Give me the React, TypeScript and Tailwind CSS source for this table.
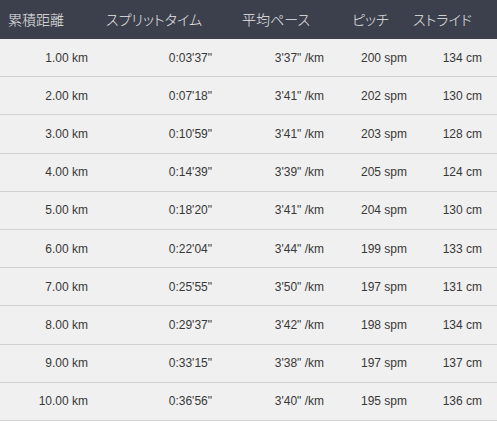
import React from "react";

const rows = [
  ["1.00 km", "0:03'37\"", "3'37\" /km", "200 spm", "134 cm"],
  ["2.00 km", "0:07'18\"", "3'41\" /km", "202 spm", "130 cm"],
  ["3.00 km", "0:10'59\"", "3'41\" /km", "203 spm", "128 cm"],
  ["4.00 km", "0:14'39\"", "3'39\" /km", "205 spm", "124 cm"],
  ["5.00 km", "0:18'20\"", "3'41\" /km", "204 spm", "130 cm"],
  ["6.00 km", "0:22'04\"", "3'44\" /km", "199 spm", "133 cm"],
  ["7.00 km", "0:25'55\"", "3'50\" /km", "197 spm", "131 cm"],
  ["8.00 km", "0:29'37\"", "3'42\" /km", "198 spm", "134 cm"],
  ["9.00 km", "0:33'15\"", "3'38\" /km", "197 spm", "137 cm"],
  ["10.00 km", "0:36'56\"", "3'40\" /km", "195 spm", "136 cm"],
];

const grid = "grid grid-cols-[97px_130px_113px_70px_87px]";

export default function App() {
  return (
    <div className="w-[497px] h-[423px] bg-white overflow-hidden">
      <div
        className={`${grid} h-[39px] items-center bg-[#3b404c] text-[#e8e8e8] text-[14px] font-light [font-family:'Noto_Sans_CJK_JP',sans-serif] [font-feature-settings:'palt']`}
      >
        <div className="pl-[8px]">累積距離</div>
        <div className="pl-[9px]">スプリットタイム</div>
        <div className="pl-[15px]">平均ペース</div>
        <div className="pl-[12px]">ピッチ</div>
        <div className="pl-[3px]">ストライド</div>
      </div>
      {rows.map((r, i) => (
        <div
          key={i}
          className={`${grid} h-[38.2px] items-center bg-[#f0f0f0] border-b border-[#d2d2d2] text-[12px] text-[#383838] [font-family:'Liberation_Sans',Arial,sans-serif]`}
        >
          <div className="text-right pr-[9px]">{r[0]}</div>
          <div className="text-right pr-[15px]">{r[1]}</div>
          <div className="text-right pr-[16px]">{r[2]}</div>
          <div className="text-right pr-[3px]">{r[3]}</div>
          <div className="text-right pr-[15px]">{r[4]}</div>
        </div>
      ))}
    </div>
  );
}
